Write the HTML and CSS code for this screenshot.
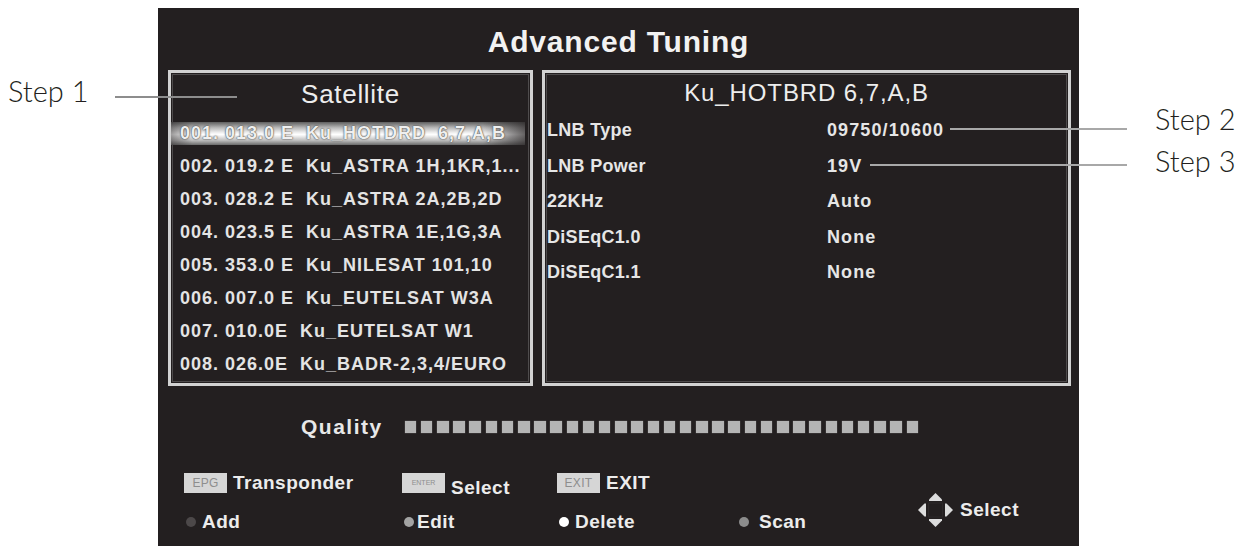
FILE: index.html
```html
<!DOCTYPE html>
<html lang="en">
<head>
<meta charset="utf-8">
<title>Advanced Tuning</title>
<link rel="stylesheet" href="styles.css">
</head>
<body>
<div class="page">
  <div class="screen">
    <h1 class="title">Advanced Tuning</h1>
    <div class="panels">
      <section class="panel sat">
        <h2 class="sat-head">Satellite</h2>
        <ul class="sat-list">
          <li class="sat-row active">001. 013.0 E  Ku_HOTDRD  6,7,A,B</li>
          <li class="sat-row">002. 019.2 E  Ku_ASTRA 1H,1KR,1...</li>
          <li class="sat-row">003. 028.2 E  Ku_ASTRA 2A,2B,2D</li>
          <li class="sat-row">004. 023.5 E  Ku_ASTRA 1E,1G,3A</li>
          <li class="sat-row">005. 353.0 E  Ku_NILESAT 101,10</li>
          <li class="sat-row">006. 007.0 E  Ku_EUTELSAT W3A</li>
          <li class="sat-row">007. 010.0E  Ku_EUTELSAT W1</li>
          <li class="sat-row">008. 026.0E  Ku_BADR-2,3,4/EURO</li>
        </ul>
      </section>
      <section class="panel params">
        <h2 class="params-head">Ku_HOTBRD 6,7,A,B</h2>
        <div class="param-grid">
          <div class="p-label">LNB Type</div><div class="p-value">09750/10600</div>
          <div class="p-label">LNB Power</div><div class="p-value">19V</div>
          <div class="p-label">22KHz</div><div class="p-value">Auto</div>
          <div class="p-label">DiSEqC1.0</div><div class="p-value">None</div>
          <div class="p-label">DiSEqC1.1</div><div class="p-value">None</div>
        </div>
      </section>
    </div>
    <div class="quality">
      <span class="q-label">Quality</span>
      <div class="q-bar">
        <span></span><span></span><span></span><span></span><span></span><span></span><span></span><span></span>
        <span></span><span></span><span></span><span></span><span></span><span></span><span></span><span></span>
        <span></span><span></span><span></span><span></span><span></span><span></span><span></span><span></span>
        <span></span><span></span><span></span><span></span><span></span><span></span><span></span><span></span>
      </div>
    </div>
    <div class="legend">
      <div class="item"><span class="key">EPG</span><span class="lbl">Transponder</span></div>
      <div class="item"><span class="key key-enter">ENTER</span><span class="lbl lbl-low">Select</span></div>
      <div class="item"><span class="key">EXIT</span><span class="lbl">EXIT</span></div>
      <div class="item nav">
        <svg class="nav-icon" viewBox="0 0 37 36" width="37" height="36" aria-hidden="true">
          <polygon points="12,9 25,9 25,7.5 18.5,1 12,7.5" fill="#dcdcdc"/>
          <polygon points="12,27 25,27 25,28.5 18.5,35 12,28.5" fill="#dcdcdc"/>
          <polygon points="9,11.5 9,24.5 7.5,24.5 1,18 7.5,11.5" fill="#dcdcdc"/>
          <polygon points="28,11.5 28,24.5 29.5,24.5 36,18 29.5,11.5" fill="#dcdcdc"/>
          <rect x="11.5" y="11" width="14" height="14" fill="none" stroke="#2c2829" stroke-width="1"/>
        </svg>
        <span class="lbl">Select</span>
      </div>
      <div class="item r2"><span class="dot dot-add"></span><span class="lbl">Add</span></div>
      <div class="item r2"><span class="dot dot-edit"></span><span class="lbl lbl-tight">Edit</span></div>
      <div class="item r2"><span class="dot dot-delete"></span><span class="lbl">Delete</span></div>
      <div class="item r2"><span class="dot dot-scan"></span><span class="lbl lbl-wide">Scan</span></div>
    </div>
  </div>

  <div class="callout step1"><span class="step-text">Step 1</span></div>
  <div class="line line1"></div>
  <div class="callout step2"><span class="step-text">Step 2</span></div>
  <div class="line line2"></div>
  <div class="callout step3"><span class="step-text">Step 3</span></div>
  <div class="line line3"></div>
</div>
</body>
</html>
```

FILE: styles.css
```css
* { box-sizing: border-box; }

html, body {
  margin: 0;
  padding: 0;
  background: #ffffff;
}

.page {
  position: relative;
  width: 1246px;
  height: 548px;
  padding: 8px 0 0 158px;
  font-family: "Liberation Sans", Arial, sans-serif;
  overflow: hidden;
}

.screen {
  width: 921px;
  height: 538px;
  background: #231f20;
  color: #ececec;
  display: flex;
  flex-direction: column;
}

.title {
  margin: 0;
  padding-top: 16px;
  height: 62px;
  line-height: 36px;
  font-size: 30px;
  font-weight: bold;
  letter-spacing: 0.8px;
  text-align: center;
  color: #f2f2f2;
}

.panels {
  display: flex;
  gap: 9px;
  padding: 0 8px 0 10px;
  height: 316px;
}

.panel {
  border: 3px solid #d2d2d2;
  box-shadow: inset 0 0 0 1px #231f20, inset 0 0 0 2px #4e4b4c;
  height: 316px;
}

.sat { width: 365px; }
.params { width: 529px; }

.sat-head {
  margin: 0 0 13px 0;
  padding-top: 6px;
  height: 49px;
  line-height: 30px;
  font-size: 26px;
  font-weight: normal;
  letter-spacing: 0.7px;
  text-align: center;
  color: #ededed;
}

.sat-list {
  list-style: none;
  margin: -13px 0 0 0;
  padding: 0;
  display: flex;
  flex-direction: column;
  gap: 10px;
}

.sat-row {
  height: 23px;
  line-height: 23px;
  margin-right: 5px;
  padding-left: 9px;
  font-size: 18px;
  font-weight: bold;
  letter-spacing: 1px;
  white-space: pre;
  color: #e4e4e4;
}

.sat-row.active {
  background:
    linear-gradient(to right, rgba(35,31,32,0.45) 0%, rgba(35,31,32,0) 6%, rgba(35,31,32,0) 88%, rgba(35,31,32,0.7) 100%),
    linear-gradient(to bottom, #5e5e5e 0%, #b9b9b9 25%, #f4f4f4 48%, #ffffff 55%, #bdbdbd 80%, #6a6a6a 100%);
  color: #efefef;
  text-shadow: 0 0 1px #3a3a3a, 0 0 2px #555555;
}

.params-head {
  margin: 0 0 5px 0;
  padding-top: 5px;
  height: 35px;
  line-height: 30px;
  font-size: 24px;
  font-weight: normal;
  letter-spacing: 0.9px;
  text-align: center;
  color: #ededed;
}

.param-grid {
  display: grid;
  grid-template-columns: 280px 1fr;
  grid-auto-rows: 35.5px;
  align-items: center;
  padding-left: 2px;
  font-size: 18px;
  font-weight: bold;
  letter-spacing: 0.3px;
  color: #e6e6e6;
}

.p-value { letter-spacing: 1.1px; }

.quality {
  display: flex;
  align-items: center;
  gap: 22px;
  height: 24px;
  margin-top: 29px;
  padding-left: 143px;
}

.q-label {
  font-size: 21px;
  font-weight: bold;
  letter-spacing: 1.5px;
  color: #e8e8e8;
  line-height: 24px;
}

.q-bar {
  display: flex;
  gap: 4.7px;
}

.q-bar span {
  width: 11.5px;
  height: 12px;
  background: #b4b4b4;
  box-shadow: 0 0 1px #8a8a8a;
}

.legend {
  display: grid;
  grid-template-columns: 218px 155px 180px 180px auto;
  grid-template-rows: 20px 20px;
  row-gap: 19px;
  margin-top: 34px;
  padding-left: 26px;
}

.item {
  display: flex;
  align-items: center;
  gap: 6px;
  height: 20px;
}

.r2 { grid-row: 2; }

.nav {
  grid-column: 5;
  grid-row: 1 / span 2;
  align-self: end;
  height: 36px;
  margin-bottom: 4px;
  gap: 6px;
}

.nav-icon { display: block; }

.key {
  display: inline-block;
  width: 43px;
  height: 20px;
  line-height: 20px;
  background: #d6d6d6;
  color: #8e8e8e;
  font-size: 12px;
  text-align: center;
  letter-spacing: 0.3px;
}

.key-enter {
  font-size: 7px;
  letter-spacing: 0;
}

.lbl {
  font-size: 19px;
  font-weight: bold;
  letter-spacing: 0.5px;
  color: #ececec;
  line-height: 20px;
}

.lbl-low { margin-top: 9px; }
.lbl-tight { margin-left: -3px; }
.lbl-wide { margin-left: 4px; }

.dot {
  display: inline-block;
  width: 10px;
  height: 10px;
  border-radius: 50%;
  margin-left: 2px;
}

.dot-add { background: #4c4849; }
.dot-edit { background: #a3a3a3; }
.dot-delete { background: #ffffff; }
.dot-scan { background: #8c8c8c; }

.callout {
  position: absolute;
  line-height: 34px;
  font-family: Lato, "Liberation Sans", sans-serif;
  font-weight: 300;
  font-size: 29px;
  color: #231f20;
}

.step1 { left: 8px; top: 74px; }
.step2 { left: 1155px; top: 102px; }
.step3 { left: 1155px; top: 144px; }

.line {
  position: absolute;
  height: 2px;
  background: #8d8d8d;
}

.line1 { left: 115px; top: 96px; width: 122px; }
.line2 { left: 950px; top: 128px; width: 177px; background: #a8a8a8; }
.line3 { left: 870px; top: 164px; width: 257px; background: #a8a8a8; }
```
